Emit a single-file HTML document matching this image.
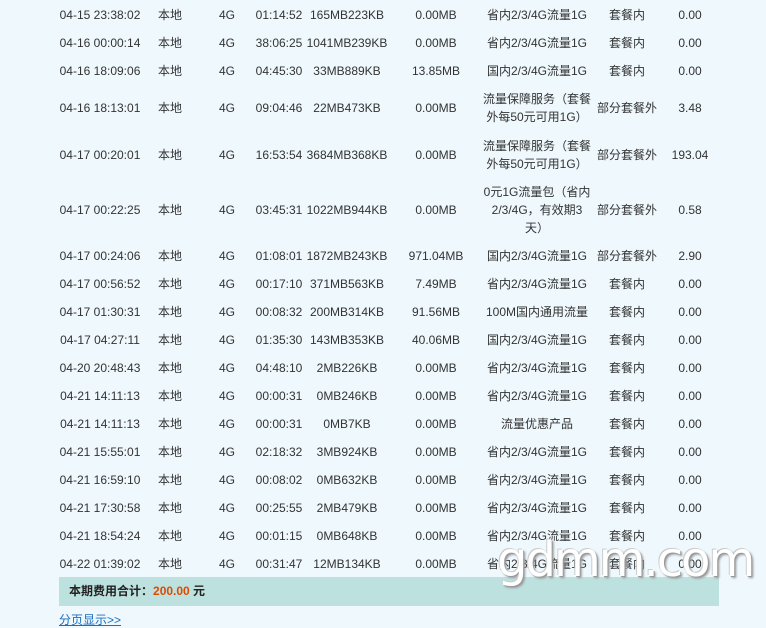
<!DOCTYPE html>
<html><head><meta charset="utf-8"><style>
html,body{margin:0;padding:0;}
body{width:766px;height:624px;background:#eef8fd;position:relative;overflow:hidden;font-family:"Liberation Sans","Noto Sans CJK SC",sans-serif;font-size:12px;color:#333;}
.c{position:absolute;display:flex;align-items:center;justify-content:center;text-align:center;line-height:18px;white-space:nowrap;}
.tot{position:absolute;left:59px;top:577px;width:660px;height:29px;background:#bde1df;font-weight:bold;font-size:12px;line-height:29px;color:#222;}
.tot span{color:#e04a00;}
.lnk{position:absolute;left:59px;top:612px;color:#1a6fc0;text-decoration:underline;font-size:12px;line-height:16px;}
.wm{position:absolute;left:497px;top:532px;font-size:48px;font-family:"DejaVu Sans",sans-serif;color:#fff;letter-spacing:-2px;text-shadow:1px 1px 0 #999,-1px -1px 0 #ccc,2px 2px 2px #999;line-height:56px;}
</style></head><body>
<div id="t"></div>
<script>
var rows=[
[14,"04-15 23:38:02","01:14:52","165MB223KB","0.00MB","省内2/3/4G流量1G","套餐内","0.00"],
[42,"04-16 00:00:14","38:06:25","1041MB239KB","0.00MB","省内2/3/4G流量1G","套餐内","0.00"],
[70,"04-16 18:09:06","04:45:30","33MB889KB","13.85MB","国内2/3/4G流量1G","套餐内","0.00"],
[107,"04-16 18:13:01","09:04:46","22MB473KB","0.00MB","流量保障服务（套餐<br>外每50元可用1G）","部分套餐外","3.48"],
[154,"04-17 00:20:01","16:53:54","3684MB368KB","0.00MB","流量保障服务（套餐<br>外每50元可用1G）","部分套餐外","193.04"],
[209,"04-17 00:22:25","03:45:31","1022MB944KB","0.00MB","0元1G流量包（省内<br>2/3/4G，有效期3<br>天）","部分套餐外","0.58"],
[255,"04-17 00:24:06","01:08:01","1872MB243KB","971.04MB","国内2/3/4G流量1G","部分套餐外","2.90"],
[283,"04-17 00:56:52","00:17:10","371MB563KB","7.49MB","省内2/3/4G流量1G","套餐内","0.00"],
[311,"04-17 01:30:31","00:08:32","200MB314KB","91.56MB","100M国内通用流量","套餐内","0.00"],
[339,"04-17 04:27:11","01:35:30","143MB353KB","40.06MB","国内2/3/4G流量1G","套餐内","0.00"],
[367,"04-20 20:48:43","04:48:10","2MB226KB","0.00MB","省内2/3/4G流量1G","套餐内","0.00"],
[395,"04-21 14:11:13","00:00:31","0MB246KB","0.00MB","省内2/3/4G流量1G","套餐内","0.00"],
[423,"04-21 14:11:13","00:00:31","0MB7KB","0.00MB","流量优惠产品","套餐内","0.00"],
[451,"04-21 15:55:01","02:18:32","3MB924KB","0.00MB","省内2/3/4G流量1G","套餐内","0.00"],
[479,"04-21 16:59:10","00:08:02","0MB632KB","0.00MB","省内2/3/4G流量1G","套餐内","0.00"],
[507,"04-21 17:30:58","00:25:55","2MB479KB","0.00MB","省内2/3/4G流量1G","套餐内","0.00"],
[535,"04-21 18:54:24","00:01:15","0MB648KB","0.00MB","省内2/3/4G流量1G","套餐内","0.00"],
[563,"04-22 01:39:02","00:31:47","12MB134KB","0.00MB","省内2/3/4G流量1G","套餐内","0.00"]];
var cols=[[100,90],[170,40],[227,30],[279,62],[347,86],[436,80],[537,112],[627,72],[690,56]];
var h="";
rows.forEach(function(r){
 var v=[r[1],"本地","4G",r[2],r[3],r[4],r[5],r[6],r[7]];
 v.forEach(function(t,i){
  var c=cols[i];
  h+='<div class="c" style="left:'+(c[0]-c[1]/2)+'px;width:'+c[1]+'px;top:'+(r[0]-29)+'px;height:60px">'+(i==6?'<div>'+t+'</div>':t)+'</div>';
 });
});
document.getElementById("t").innerHTML=h;
</script>
<div class="tot">&nbsp;&nbsp;&nbsp;本期费用合计：<span>200.00</span> 元</div>
<div class="wm">gdmm.com</div>
<div class="lnk">分页显示&gt;&gt;</div>
</body></html>
